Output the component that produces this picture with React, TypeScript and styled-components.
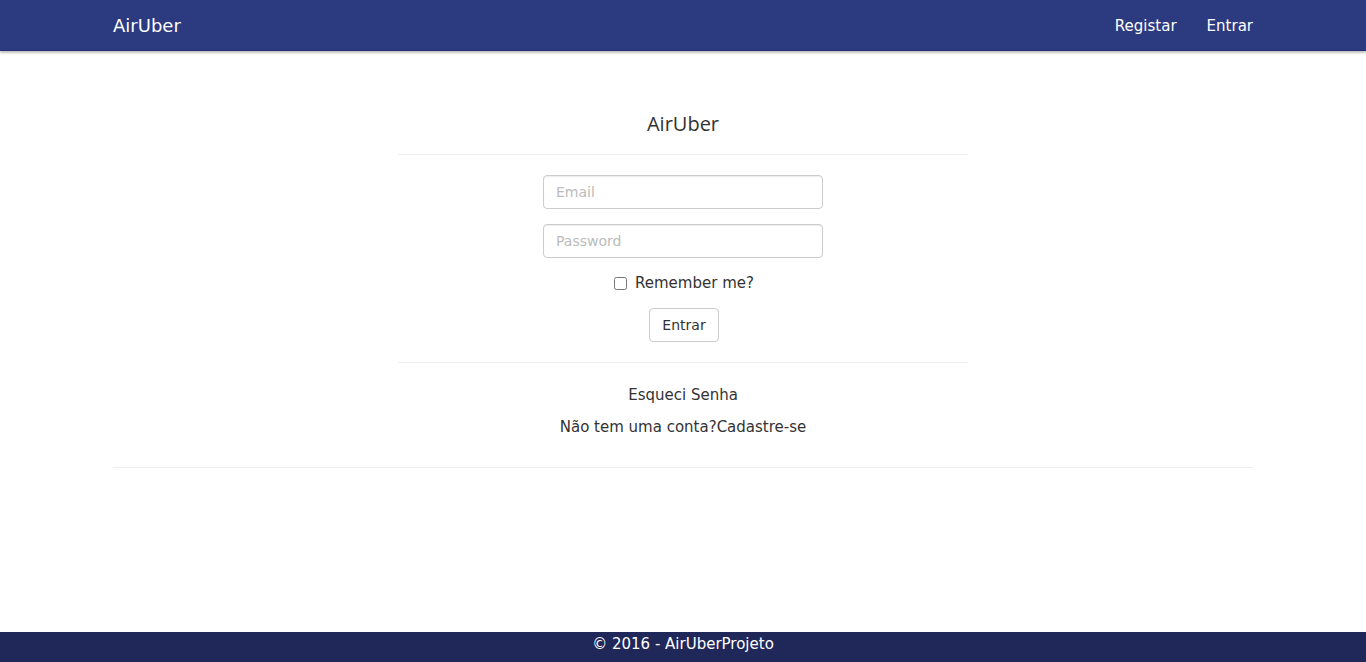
import React from "react";
import styled, { createGlobalStyle } from "styled-components";

const Global = createGlobalStyle`
  html, body { margin: 0; padding: 0; height: 100%; }
  body {
    font-family: "DejaVu Sans", Verdana, sans-serif;
    font-size: 14px;
    color: #333;
    background: #fff;
  }
  #root { min-height: 100%; }
  * { box-sizing: border-box; }
`;

const Page = styled.div`
  min-height: 662px;
  display: flex;
  flex-direction: column;
`;

const NavBar = styled.header`
  height: 51px;
  background: #2c3a80;
  box-shadow: 0 2px 2px rgba(0, 0, 0, 0.25);
  border-bottom: 1px solid #25306c;
`;

const Container = styled.div`
  width: 1140px;
  margin: 0 auto;
`;

const NavInner = styled(Container)`
  height: 50px;
  padding-top: 1px;
  display: flex;
  align-items: center;
  justify-content: space-between;
`;

const Brand = styled.a`
  color: #fff;
  font-size: 18px;
  text-decoration: none;
`;

const NavLinks = styled.nav`
  display: flex;
  gap: 30px;
`;

const NavLink = styled.a`
  color: #fff;
  font-size: 15px;
  text-decoration: none;
`;

const Main = styled(Container)`
  flex: 1;
  padding-top: 59px;
`;

const Panel = styled.section`
  width: 570px;
  margin: 0 auto;
  display: flex;
  flex-direction: column;
  align-items: center;
`;

const Title = styled.h2`
  margin: 0;
  font-family: "Open Sans", "Noto Sans", sans-serif;
  font-weight: 400;
  font-size: 20px;
  color: #333;
  line-height: 28px;
`;

const Rule = styled.hr<{ $top: number; $bottom: number }>`
  width: 100%;
  border: 0;
  border-top: 1px solid #eee;
  margin: ${(p) => p.$top}px 0 ${(p) => p.$bottom}px;
`;

const Form = styled.form`
  display: flex;
  flex-direction: column;
  align-items: center;
  gap: 15px;
`;

const Input = styled.input`
  width: 280px;
  height: 34px;
  padding: 6px 12px;
  border: 1px solid #ccc;
  border-radius: 4px;
  font-family: "DejaVu Sans", Verdana, sans-serif;
  font-size: 14px;
  color: #555;
  box-shadow: inset 0 1px 1px rgba(0, 0, 0, 0.075);
  &::placeholder { color: #bbb; }
`;

const CheckRow = styled.label`
  display: flex;
  align-items: center;
  gap: 8px;
  font-size: 15px;
  height: 18px;
  margin-top: 1px;
  padding-left: 2px;
`;

const Check = styled.input`
  margin: 0;
  width: 13px;
  height: 13px;
`;

const Button = styled.button`
  height: 34px;
  padding: 0 12px;
  border: 1px solid #ccc;
  border-radius: 4px;
  background: #fff;
  font-family: "DejaVu Sans", Verdana, sans-serif;
  font-size: 14px;
  color: #333;
  margin-top: 1px;
  margin-left: 2px;
`;

const LinkText = styled.p`
  margin: 0;
  font-size: 15px;
  line-height: 20px;
  text-align: center;
  & + & { margin-top: 12px; }
`;

const Footer = styled.footer`
  height: 30px;
  background: #1f2859;
  color: #fff;
  font-size: 15px;
  display: flex;
  justify-content: center;
  align-items: flex-start;
  padding-top: 3px;
`;

export default function App() {
  return (
    <>
      <Global />
      <Page>
        <NavBar>
          <NavInner>
            <Brand href="#">AirUber</Brand>
            <NavLinks>
              <NavLink href="#">Registar</NavLink>
              <NavLink href="#">Entrar</NavLink>
            </NavLinks>
          </NavInner>
        </NavBar>
        <Main>
          <Panel>
            <Title>AirUber</Title>
            <Rule $top={16} $bottom={20} />
            <Form onSubmit={(e) => e.preventDefault()}>
              <Input type="email" placeholder="Email" />
              <Input type="password" placeholder="Password" />
              <CheckRow>
                <Check type="checkbox" />
                Remember me?
              </CheckRow>
              <Button type="submit">Entrar</Button>
            </Form>
            <Rule $top={20} $bottom={22} />
            <LinkText>Esqueci Senha</LinkText>
            <LinkText>Não tem uma conta?Cadastre-se</LinkText>
          </Panel>
          <Rule $top={30} $bottom={0} />
        </Main>
        <Footer>© 2016 - AirUberProjeto</Footer>
      </Page>
    </>
  );
}
